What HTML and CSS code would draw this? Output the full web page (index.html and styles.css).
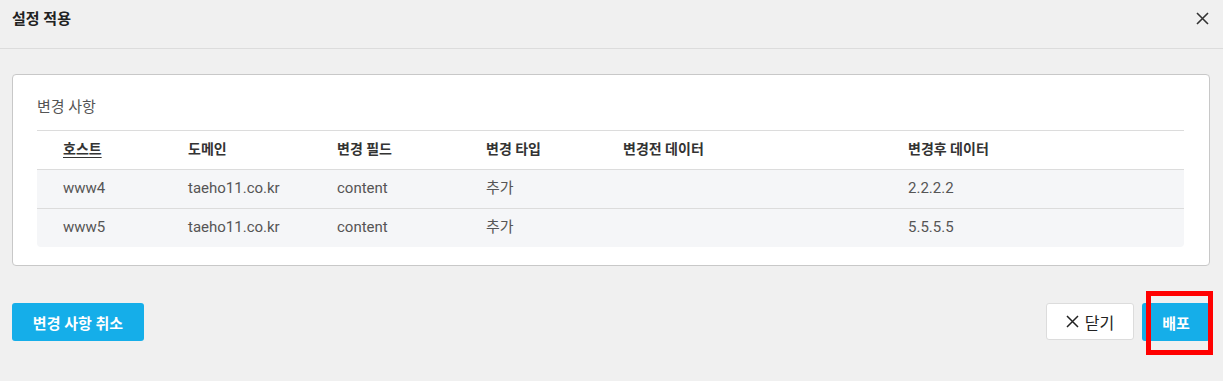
FILE: index.html
```html
<!DOCTYPE html>
<html lang="ko">
<head>
    <meta charset="UTF-8">
    <title>설정 적용</title>
    <link rel="stylesheet" href="styles.css">
</head>
<body>
    <div class="modal-header">
        <h1>설정 적용</h1>
        <button class="close-x" aria-label="닫기">
            <svg width="13" height="13" viewBox="0 0 13 13"><path d="M1 1L12 12M12 1L1 12" stroke="#333" stroke-width="1.6" fill="none"/></svg>
        </button>
    </div>

    <div class="modal-body">
        <div class="card">
            <h2>변경 사항</h2>
            <table class="changes">
                <colgroup>
                    <col style="width:125px">
                    <col style="width:149px">
                    <col style="width:149px">
                    <col style="width:137px">
                    <col style="width:285px">
                    <col>
                </colgroup>
                <thead>
                    <tr>
                        <th><u>호스트</u></th>
                        <th>도메인</th>
                        <th>변경 필드</th>
                        <th>변경 타입</th>
                        <th>변경전 데이터</th>
                        <th>변경후 데이터</th>
                    </tr>
                </thead>
                <tbody>
                    <tr>
                        <td>www4</td>
                        <td>taeho11.co.kr</td>
                        <td>content</td>
                        <td>추가</td>
                        <td></td>
                        <td>2.2.2.2</td>
                    </tr>
                    <tr>
                        <td>www5</td>
                        <td>taeho11.co.kr</td>
                        <td>content</td>
                        <td>추가</td>
                        <td></td>
                        <td>5.5.5.5</td>
                    </tr>
                </tbody>
            </table>
        </div>
    </div>

    <div class="modal-footer">
        <button class="btn btn-blue">변경 사항 취소</button>
        <div class="right">
            <button class="btn btn-white">
                <svg width="13" height="13" viewBox="0 0 13 13"><path d="M1 1L12 12M12 1L1 12" stroke="#222" stroke-width="1.5" fill="none"/></svg>
                닫기
            </button>
            <div class="deploy-wrap">
                <button class="btn btn-blue deploy">배포</button>
                <div class="mark"></div>
            </div>
        </div>
    </div>
</body>
</html>
```

FILE: styles.css
```css
html, body {
    min-height: 381px;
}
body {
    margin: 0;
    background: #f0f0f0;
    font-family: Roboto, "Noto Sans CJK KR", sans-serif;
    color: #333;
}

.modal-header {
    height: 48px;
    border-bottom: 1px solid #dcdcdc;
    display: flex;
    align-items: center;
    justify-content: space-between;
    padding: 0 12px 0 12px;
}
.modal-header h1 {
    margin: 0;
    font-size: 15px;
    font-weight: bold;
    color: #222;
    margin-top: -14px;
}
.close-x {
    background: none;
    border: none;
    padding: 0;
    margin-top: -11px;
    margin-right: 2px;
    display: flex;
}

.modal-body {
    padding: 25px 13px 0 12px;
}
.card {
    background: #fff;
    border: 1px solid #c8c8c8;
    border-radius: 4px;
    padding: 21px 25px 18px 24px;
}
.card h2 {
    margin: 0 0 12px 0;
    font-size: 15px;
    font-weight: normal;
    color: #555;
    line-height: 22px;
}

.changes {
    width: 100%;
    table-layout: fixed;
    border-collapse: collapse;
    font-size: 14px;
    border-top: 1px solid #dcdcdc;
}
.changes th, .changes td {
    text-align: left;
    padding: 0 0 0 26px;
    white-space: nowrap;
    line-height: 18px;
}
.changes th {
    height: 36px;
    font-weight: bold;
    color: #333;
    border-bottom: 1px solid #dcdcdc;
    padding-bottom: 2px;
}
.changes th u {
    text-underline-offset: 3px;
}
.changes td {
    height: 36px;
    background: #f5f6f8;
    color: #555;
    font-size: 15px;
    padding-bottom: 2px;
}
.changes tbody tr:first-child td {
    border-bottom: 1px solid #dcdcdc;
}
.changes tbody tr:last-child td:first-child {
    border-bottom-left-radius: 4px;
}
.changes tbody tr:last-child td:last-child {
    border-bottom-right-radius: 4px;
}

.modal-footer {
    display: flex;
    justify-content: space-between;
    padding: 37px 13px 0 12px;
}
.right {
    display: flex;
    gap: 8px;
}
.btn {
    height: 38px;
    border-radius: 3px;
    font-family: Roboto, "Noto Sans CJK KR", sans-serif;
    font-size: 15px;
    font-weight: bold;
    cursor: pointer;
    display: flex;
    align-items: center;
    justify-content: center;
}
.btn-blue {
    background: #15aee9;
    color: #fff;
    border: none;
    width: 132px;
    padding: 0;
}
.btn-white {
    background: #fff;
    color: #222;
    border: 1px solid #dcdcdc;
    width: 88px;
    gap: 6px;
    font-weight: normal;
    font-size: 16px;
    height: 37px;
}
.deploy-wrap {
    position: relative;
}
.deploy {
    width: 68px;
}
.mark {
    position: absolute;
    left: 4px;
    top: -12px;
    width: 57px;
    height: 54px;
    border: 5px solid #ff0000;
}
```
